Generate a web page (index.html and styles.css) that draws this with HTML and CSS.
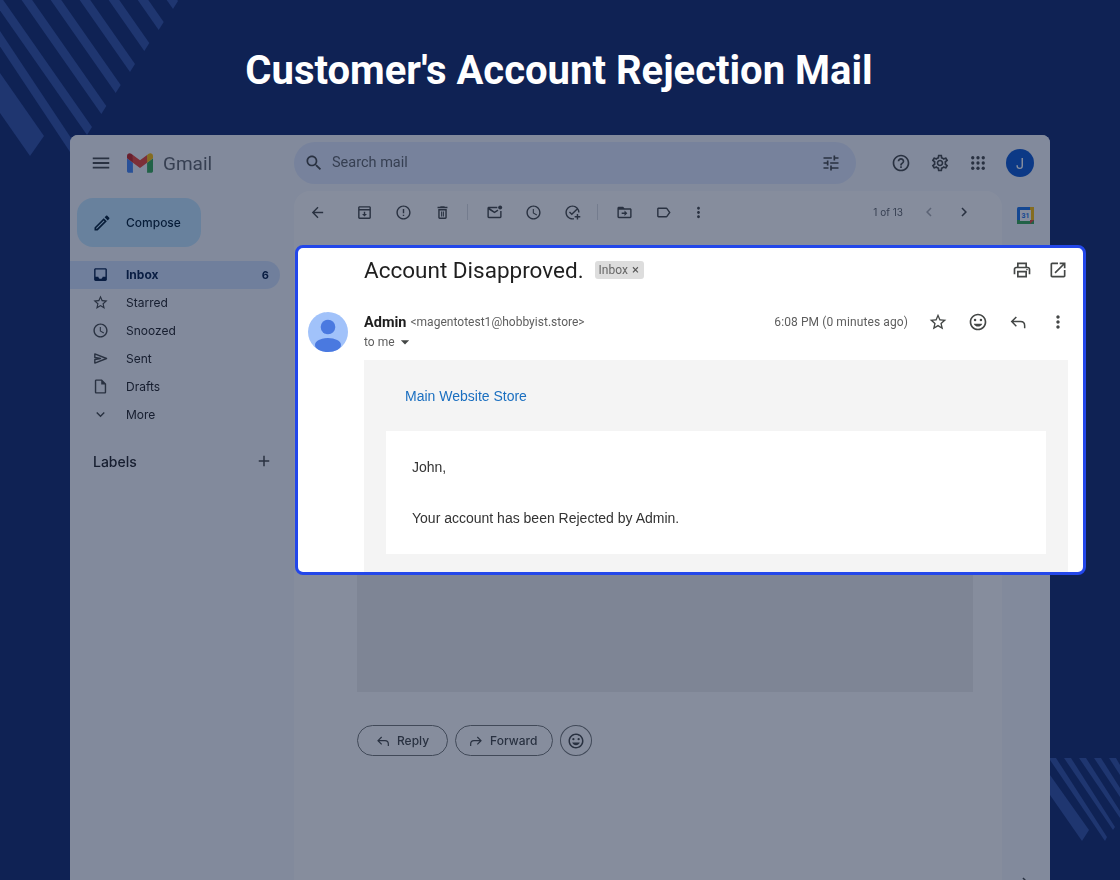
FILE: index.html
```html
<!DOCTYPE html>
<html lang="en">
<head>
    <meta charset="UTF-8">
    <title>Customer's Account Rejection Mail</title>
    <link rel="stylesheet" href="styles.css">
</head>
<body>
    <!-- icon sprite -->
    <svg class="sprite" aria-hidden="true">
        <symbol id="i-menu" viewBox="0 0 24 24"><path d="M3 18h18v-2H3v2zm0-5h18v-2H3v2zm0-7v2h18V6H3z"/></symbol>
        <symbol id="i-search" viewBox="0 0 24 24"><path d="M15.5 14h-.79l-.28-.27C15.41 12.59 16 11.11 16 9.5 16 5.91 13.09 3 9.5 3S3 5.91 3 9.5 5.91 16 9.5 16c1.61 0 3.09-.59 4.23-1.57l.27.28v.79l5 4.99L20.49 19l-4.99-5zm-6 0C7.01 14 5 11.99 5 9.5S7.01 5 9.5 5 14 7.01 14 9.5 11.99 14 9.5 14z"/></symbol>
        <symbol id="i-tune" viewBox="0 0 24 24"><path d="M3 17v2h6v-2H3zM3 5v2h10V5H3zm10 16v-2h8v-2h-8v-2h-2v6h2zM7 9v2H3v2h4v2h2V9H7zm14 4v-2H11v2h10zm-6-4h2V7h4V5h-4V3h-2v6z"/></symbol>
        <symbol id="i-help" viewBox="0 0 24 24"><path d="M11 18h2v-2h-2v2zm1-16C6.48 2 2 6.48 2 12s4.48 10 10 10 10-4.48 10-10S17.52 2 12 2zm0 18c-4.41 0-8-3.59-8-8s3.59-8 8-8 8 3.59 8 8-3.59 8-8 8zm0-14c-2.21 0-4 1.79-4 4h2c0-1.1.9-2 2-2s2 .9 2 2c0 2-3 1.75-3 5h2c0-2.25 3-2.5 3-5 0-2.21-1.79-4-4-4z"/></symbol>
        <symbol id="i-gear" viewBox="0 0 24 24"><path d="M19.43 12.98c.04-.32.07-.64.07-.98 0-.34-.03-.66-.07-.98l2.11-1.65c.19-.15.24-.42.12-.64l-2-3.46c-.09-.16-.26-.25-.44-.25-.06 0-.12.01-.17.03l-2.49 1c-.52-.4-1.08-.73-1.69-.98l-.38-2.65C14.46 2.18 14.25 2 14 2h-4c-.25 0-.46.18-.49.42l-.38 2.65c-.61.25-1.17.59-1.69.98l-2.49-1c-.06-.02-.12-.03-.18-.03-.17 0-.34.09-.43.25l-2 3.46c-.13.22-.07.49.12.64l2.11 1.65c-.04.32-.07.65-.07.98 0 .33.03.66.07.98l-2.11 1.65c-.19.15-.24.42-.12.64l2 3.46c.09.16.26.25.44.25.06 0 .12-.01.17-.03l2.49-1c.52.4 1.08.73 1.69.98l.38 2.65c.03.24.24.42.49.42h4c.25 0 .46-.18.49-.42l.38-2.65c.61-.25 1.17-.59 1.69-.98l2.49 1c.06.02.12.03.18.03.17 0 .34-.09.43-.25l2-3.46c.12-.22.07-.49-.12-.64l-2.11-1.65zm-1.98-1.71c.04.31.05.52.05.73 0 .21-.02.43-.05.73l-.14 1.13.89.7 1.08.84-.7 1.21-1.27-.51-1.04-.42-.9.68c-.43.32-.84.56-1.25.73l-1.06.43-.16 1.13-.2 1.35h-1.4l-.19-1.35-.16-1.13-1.06-.43c-.43-.18-.83-.41-1.23-.71l-.91-.7-1.06.43-1.27.51-.7-1.21 1.08-.84.89-.7-.14-1.13c-.03-.31-.05-.54-.05-.74s.02-.43.05-.73l.14-1.13-.89-.7-1.08-.84.7-1.21 1.27.51 1.04.42.9-.68c.43-.32.84-.56 1.25-.73l1.06-.43.16-1.13.2-1.35h1.39l.19 1.35.16 1.13 1.06.43c.43.18.83.41 1.23.71l.91.7 1.06-.43 1.27-.51.7 1.21-1.07.85-.89.7.14 1.13zM12 8c-2.21 0-4 1.79-4 4s1.79 4 4 4 4-1.79 4-4-1.79-4-4-4zm0 6c-1.1 0-2-.9-2-2s.9-2 2-2 2 .9 2 2-.9 2-2 2z"/></symbol>
        <symbol id="i-apps" viewBox="0 0 24 24"><circle cx="5" cy="5" r="2.2"/><circle cx="12" cy="5" r="2.2"/><circle cx="19" cy="5" r="2.2"/><circle cx="5" cy="12" r="2.2"/><circle cx="12" cy="12" r="2.2"/><circle cx="19" cy="12" r="2.2"/><circle cx="5" cy="19" r="2.2"/><circle cx="12" cy="19" r="2.2"/><circle cx="19" cy="19" r="2.2"/></symbol>
        <symbol id="i-pen" viewBox="0 0 24 24"><path d="M3 17.25V21h3.75L17.81 9.94l-3.75-3.75L3 17.25zM5.92 19H5v-.92l9.06-9.06.92.92L5.92 19zM20.71 5.63l-2.34-2.34c-.39-.39-1.02-.39-1.41 0l-1.83 1.83 3.75 3.75 1.83-1.83c.39-.39.39-1.02 0-1.41z"/></symbol>
        <symbol id="i-inbox" viewBox="0 0 24 24"><path d="M19 3H5c-1.1 0-2 .9-2 2v14c0 1.1.9 2 2 2h14c1.1 0 2-.9 2-2V5c0-1.1-.9-2-2-2zm0 12h-4c0 1.66-1.35 3-3 3s-3-1.34-3-3H5V5h14v10z"/></symbol>
        <symbol id="i-star" viewBox="0 0 24 24"><path d="M22 9.24l-7.19-.62L12 2 9.19 8.63 2 9.24l5.46 4.73L5.82 21 12 17.27 18.18 21l-1.63-7.03L22 9.24zM12 15.4l-3.76 2.27 1-4.28-3.32-2.88 4.38-.38L12 6.1l1.71 4.04 4.38.38-3.32 2.88 1 4.28L12 15.4z"/></symbol>
        <symbol id="i-clock" viewBox="0 0 24 24"><path d="M11.99 2C6.47 2 2 6.48 2 12s4.47 10 9.99 10C17.52 22 22 17.52 22 12S17.52 2 11.99 2zM12 20c-4.42 0-8-3.58-8-8s3.58-8 8-8 8 3.58 8 8-3.58 8-8 8zm.5-13H11v6l5.25 3.15.75-1.23-4.5-2.67z"/></symbol>
        <symbol id="i-sent" viewBox="0 0 24 24"><path d="M4 5.500 20.500 12 4 18.500v-5l8-1.500-8-1.500z" fill="none" stroke="#444746" stroke-width="2" stroke-linejoin="round"/></symbol>
        <symbol id="i-draft" viewBox="0 0 24 24"><path d="M14 2H6c-1.1 0-1.99.9-1.99 2L4 20c0 1.1.89 2 1.99 2H18c1.1 0 2-.9 2-2V8l-6-6zM6 20V4h7v5h5v11H6z"/></symbol>
        <symbol id="i-down" viewBox="0 0 24 24"><path d="M16.59 8.59L12 13.17 7.41 8.59 6 10l6 6 6-6z"/></symbol>
        <symbol id="i-add" viewBox="0 0 24 24"><path d="M19 13h-6v6h-2v-6H5v-2h6V5h2v6h6v2z"/></symbol>
        <symbol id="i-back" viewBox="0 0 24 24"><path d="M20 11H7.83l5.59-5.59L12 4l-8 8 8 8 1.41-1.41L7.83 13H20v-2z"/></symbol>
        <symbol id="i-archive" viewBox="0 0 24 24"><path d="M19 3H5c-1.1 0-2 .9-2 2v14c0 1.1.9 2 2 2h14c1.1 0 2-.9 2-2V5c0-1.1-.9-2-2-2zM5 5h14v2H5V5zm0 14V9h14v10H5zm8-8h-2v3H8.5l3.5 3.5 3.5-3.5H13v-3z"/></symbol>
        <symbol id="i-report" viewBox="0 0 24 24"><path d="M12 2C6.48 2 2 6.48 2 12s4.48 10 10 10 10-4.48 10-10S17.52 2 12 2zm0 18c-4.41 0-8-3.59-8-8s3.59-8 8-8 8 3.59 8 8-3.59 8-8 8zM11 7h2v6h-2zM11 15h2v2h-2z"/></symbol>
        <symbol id="i-trash" viewBox="0 0 24 24"><path d="M6 19c0 1.1.9 2 2 2h8c1.1 0 2-.9 2-2V7H6v12zM8 9h8v10H8V9zm7.5-5l-1-1h-5l-1 1H5v2h14V4zM10 10.5h1.5v7H10zM12.5 10.5H14v7h-1.500z"/></symbol>
        <symbol id="i-unread" viewBox="0 0 24 24"><path d="M16 4H4c-1.1 0-2 .9-2 2v12c0 1.100.9 2 2 2h16c1.100 0 2-.9 2-2V10h-2v8H4V8l8 5 5.500-3.400-1.100-1.700L12 10.500 5.500 6H16z"/><circle cx="20" cy="5" r="2.800"/></symbol>
        <symbol id="i-task" viewBox="0 0 24 24"><path d="M12 2C6.480 2 2 6.480 2 12s4.480 10 10 10c.7 0 1.400-.07 2-.2v-2.060c-.64.170-1.310.260-2 .260-4.410 0-8-3.590-8-8s3.590-8 8-8 8 3.590 8 8h2c0-5.520-4.480-10-10-10zM8.400 10.600 7 12l4 4 8-8-1.400-1.400L11 13.200z"/><path d="M18 14h2v3h3v2h-3v3h-2v-3h-3v-2h3z"/></symbol>
        <symbol id="i-move" viewBox="0 0 24 24"><path d="M20 6h-8l-2-2H4c-1.100 0-2 .9-2 2v12c0 1.100.9 2 2 2h16c1.100 0 2-.9 2-2V8c0-1.100-.9-2-2-2zm0 12H4V8h16v10zm-8-1 4-4-4-4v3H8v2h4z"/></symbol>
        <symbol id="i-label" viewBox="0 0 24 24"><path d="M17.630 5.840C17.270 5.330 16.670 5 16 5L5 5.010C3.900 5.010 3 5.900 3 7v10c0 1.100.9 1.990 2 1.990L16 19c.67 0 1.270-.33 1.630-.84L22 12l-4.370-6.160zM16 17H5V7h11l3.550 5L16 17z"/></symbol>
        <symbol id="i-more" viewBox="0 0 24 24"><path d="M12 8c1.100 0 2-.9 2-2s-.9-2-2-2-2 .9-2 2 .9 2 2 2zm0 2c-1.100 0-2 .9-2 2s.9 2 2 2 2-.9 2-2-.9-2-2-2zm0 6c-1.100 0-2 .9-2 2s.9 2 2 2 2-.9 2-2-.9-2-2-2z"/></symbol>
        <symbol id="i-left" viewBox="0 0 24 24"><path d="M15.410 7.410 14 6l-6 6 6 6 1.410-1.410L10.830 12z"/></symbol>
        <symbol id="i-right" viewBox="0 0 24 24"><path d="M10 6 8.590 7.410 13.170 12l-4.580 4.590L10 18l6-6z"/></symbol>
        <symbol id="i-print" viewBox="0 0 24 24"><path d="M19 8h-1V3H6v5H5c-1.660 0-3 1.340-3 3v6h4v4h12v-4h4v-6c0-1.660-1.340-3-3-3zM8 5h8v3H8V5zm8 14H8v-4h8v4zm2-2v-4H6v4H4v-6c0-.55.45-1 1-1h14c.55 0 1 .45 1 1v6h-2z"/><circle cx="18" cy="11.500" r="1"/></symbol>
        <symbol id="i-open" viewBox="0 0 24 24"><path d="M19 19H5V5h7V3H5c-1.110 0-2 .9-2 2v14c0 1.100.89 2 2 2h14c1.100 0 2-.9 2-2v-7h-2v7zM14 3v2h3.590l-9.830 9.830 1.410 1.410L19 6.410V10h2V3h-7z"/></symbol>
        <symbol id="i-smile" viewBox="0 0 24 24"><path d="M11.990 2C6.470 2 2 6.480 2 12s4.470 10 9.990 10C17.520 22 22 17.520 22 12S17.520 2 11.990 2zM12 20c-4.420 0-8-3.580-8-8s3.580-8 8-8 8 3.580 8 8-3.580 8-8 8z"/><circle cx="15.500" cy="9.500" r="1.500"/><circle cx="8.500" cy="9.500" r="1.500"/><path d="M12 17.500c2.330 0 4.310-1.460 5.110-3.500H6.890c.8 2.040 2.780 3.500 5.110 3.500z"/></symbol>
        <symbol id="i-reply" viewBox="0 0 24 24"><path d="M10 6 4.500 11.500 10 17M4.500 11.500H15c3 0 5 2 5 5v3" fill="none" stroke="#444746" stroke-width="1.800"/></symbol>
        <symbol id="i-forward" viewBox="0 0 24 24"><path d="M14 6l5.500 5.500L14 17M19.500 11.500H9c-3 0-5 2-5 5v3" fill="none" stroke="#444746" stroke-width="1.800"/></symbol>
        <symbol id="i-drop" viewBox="0 0 24 24"><path d="M7 10l5 5 5-5z"/></symbol>
    </svg>

    <!-- background stripes -->
    <svg class="stripes" viewBox="0 0 1120 880" aria-hidden="true">
        <polygon points="44,136 30,156 -100,-30 -100,-70"/>
        <polygon points="77.700,148 72.700,156 -22.300,13 -17.300,5"/>
        <polygon points="92,127 87,135 -13,-8 -8,-16"/>
        <polygon points="106.300,106 101.300,114 1.300,-29 6.300,-37"/>
        <polygon points="120.700,85 115.700,93 15.700,-50 20.700,-58"/>
        <polygon points="135,64 130,72 30,-71 35,-79"/>
        <polygon points="149.300,43 144.300,51 44.300,-92 49.300,-100"/>
        <polygon points="163.700,22 158.700,30 58.700,-113 63.700,-121"/>
        <polygon points="178,1 173,9 73,-134 78,-142"/>
        <polygon points="1050,775 1089,830 1082,841 1050,795"/>
        <polygon points="1050,758 1056,758 1107,837 1105,841 1050,760"/>
        <polygon points="1064,758 1071,758 1115,827 1113,830"/>
        <polygon points="1079,758 1086,758 1120,811 1120,818"/>
        <polygon points="1094,758 1101,758 1120,788 1120,797"/>
        <polygon points="1109,758 1116,758 1120,765 1120,775"/>
    </svg>

    <h1 class="page-title">Customer's Account Rejection Mail</h1>

    <div class="gmail-window">
        <div class="gmail">
            <aside class="sidebar">
                <div class="brand">
                    <svg class="icon brand-menu"><use href="#i-menu"/></svg>
                    <svg class="gmail-logo" viewBox="52 42 88 66">
                        <path fill="#4285f4" d="M58 108h14V74L52 59v43c0 3.320 2.690 6 6 6"/>
                        <path fill="#34a853" d="M120 108h14c3.320 0 6-2.690 6-6V59l-20 15"/>
                        <path fill="#fbbc04" d="M120 48v26l20-15v-8c0-7.420-8.470-11.650-14.400-7.200"/>
                        <path fill="#ea4335" d="M72 74V48l24 18 24-18v26L96 92"/>
                        <path fill="#c5221f" d="M52 51v8l20 15V48l-5.600-4.200c-5.940-4.450-14.400-.22-14.400 7.200"/>
                    </svg>
                    <span class="brand-name">Gmail</span>
                </div>
                <div class="compose">
                    <svg class="icon compose-icon"><use href="#i-pen"/></svg>
                    <span>Compose</span>
                </div>
                <nav class="nav">
                    <div class="nav-item active">
                        <svg class="icon"><use href="#i-inbox"/></svg>
                        <span>Inbox</span>
                        <span class="nav-count">6</span>
                    </div>
                    <div class="nav-item"><svg class="icon"><use href="#i-star"/></svg><span>Starred</span></div>
                    <div class="nav-item"><svg class="icon"><use href="#i-clock"/></svg><span>Snoozed</span></div>
                    <div class="nav-item"><svg class="icon"><use href="#i-sent"/></svg><span>Sent</span></div>
                    <div class="nav-item"><svg class="icon"><use href="#i-draft"/></svg><span>Drafts</span></div>
                    <div class="nav-item"><svg class="icon"><use href="#i-down"/></svg><span>More</span></div>
                </nav>
                <div class="labels">
                    <span>Labels</span>
                    <svg class="icon"><use href="#i-add"/></svg>
                </div>
            </aside>

            <div class="content">
                <header class="topbar">
                    <div class="search">
                        <svg class="icon search-icon"><use href="#i-search"/></svg>
                        <span class="search-text">Search mail</span>
                        <svg class="icon tune-icon"><use href="#i-tune"/></svg>
                    </div>
                    <div class="top-actions">
                        <span class="top-btn"><svg class="icon-lg"><use href="#i-help"/></svg></span>
                        <span class="top-btn"><svg class="icon-lg"><use href="#i-gear"/></svg></span>
                        <span class="top-btn"><svg class="icon-lg apps"><use href="#i-apps"/></svg></span>
                        <span class="avatar">J</span>
                    </div>
                </header>

                <div class="panes">
                    <main class="main">
                        <div class="toolbar">
                            <span class="tool tool-back"><svg class="icon"><use href="#i-back"/></svg></span>
                            <span class="tool tool-first"><svg class="icon"><use href="#i-archive"/></svg></span>
                            <span class="tool"><svg class="icon"><use href="#i-report"/></svg></span>
                            <span class="tool"><svg class="icon"><use href="#i-trash"/></svg></span>
                            <span class="tool-divider"></span>
                            <span class="tool"><svg class="icon"><use href="#i-unread"/></svg></span>
                            <span class="tool"><svg class="icon"><use href="#i-clock"/></svg></span>
                            <span class="tool"><svg class="icon"><use href="#i-task"/></svg></span>
                            <span class="tool-divider"></span>
                            <span class="tool"><svg class="icon"><use href="#i-move"/></svg></span>
                            <span class="tool"><svg class="icon"><use href="#i-label"/></svg></span>
                            <span class="tool tool-sm"><svg class="icon"><use href="#i-more"/></svg></span>
                            <span class="pager-text">1 of 13</span>
                            <span class="pager-btn disabled"><svg class="icon"><use href="#i-left"/></svg></span>
                            <span class="pager-btn"><svg class="icon"><use href="#i-right"/></svg></span>
                        </div>
                        <div class="mail-shadow"></div>
                        <div class="replies">
                            <span class="reply-btn reply-back"><svg class="icon"><use href="#i-reply"/></svg>Reply</span>
                            <span class="reply-btn reply-forward"><svg class="icon"><use href="#i-forward"/></svg>Forward</span>
                            <span class="reply-btn reply-emoji"><svg class="icon"><use href="#i-smile"/></svg></span>
                        </div>
                    </main>
                    <aside class="rail">
                        <svg class="calendar" viewBox="0 0 17 17">
                            <rect width="17" height="17" rx="1.500" fill="#1a73e8"/>
                            <rect x="13" width="4" height="17" fill="#fbbc04"/>
                            <rect y="13" width="17" height="4" fill="#34a853"/>
                            <rect x="3" y="3" width="11" height="11" fill="#fff"/>
                            <text x="8.500" y="11" class="calendar-day">31</text>
                            <path d="M13 17l4-4h-4z" fill="#ea4335"/>
                        </svg>
                        <svg class="icon"><use href="#i-right"/></svg>
                    </aside>
                </div>
            </div>
        </div>
        <div class="dim"></div>
    </div>

    <!-- highlighted mail -->
    <section class="mail-card">
        <div class="subject-row">
            <h2 class="subject">Account Disapproved.</h2>
            <span class="chip">Inbox <b>×</b></span>
            <span class="subject-actions">
                <svg class="icon-card"><use href="#i-print"/></svg>
                <svg class="icon-card"><use href="#i-open"/></svg>
            </span>
        </div>
        <div class="message">
            <svg class="sender-photo" viewBox="0 0 40 40">
                <circle cx="20" cy="20" r="20" fill="#a1c2fa"/>
                <circle cx="20" cy="15" r="7.300" fill="#4a79e0"/>
                <ellipse cx="20" cy="33" rx="13" ry="7" fill="#4a79e0"/>
            </svg>
            <div class="message-main">
                <div class="message-head">
                    <span class="sender-name">Admin</span>
                    <span class="sender-mail">&lt;magentotest1@hobbyist.store&gt;</span>
                    <span class="sent-time">6:08 PM (0 minutes ago)</span>
                    <span class="head-btn"><svg class="icon-card"><use href="#i-star"/></svg></span>
                    <span class="head-btn"><svg class="icon-card"><use href="#i-smile"/></svg></span>
                    <span class="head-btn"><svg class="icon-card"><use href="#i-reply"/></svg></span>
                    <span class="head-btn"><svg class="icon-card"><use href="#i-more"/></svg></span>
                </div>
                <div class="to-line">to me <svg class="icon-drop"><use href="#i-drop"/></svg></div>
                <div class="mail-body">
                    <a class="store-link">Main Website Store</a>
                    <div class="mail-box">
                        <p>John,</p>
                        <p>Your account has been Rejected by Admin.</p>
                    </div>
                </div>
            </div>
        </div>
    </section>
</body>
</html>
```

FILE: styles.css
```css
* {
    margin: 0;
    padding: 0;
    box-sizing: border-box;
}

html, body {
    height: 100%;
    overflow: hidden;
}

body {
    position: relative;
    background-color: #0f2254;
    font-family: Roboto, sans-serif;
    color: #202124;
}

.sprite {
    display: none;
}

.stripes {
    position: absolute;
    left: 0;
    top: 0;
    width: 1120px;
    height: 880px;
    fill: #1f3670;
}

.page-title {
    position: relative;
    height: 135px;
    padding: 5px 2px 0 0;
    display: flex;
    align-items: center;
    justify-content: center;
    font-size: 40px;
    font-weight: 700;
    color: #fff;
}

/* dimmed gmail window */
.gmail-window {
    position: relative;
    width: 980px;
    height: 745px;
    margin-left: 70px;
    border-radius: 8px 8px 0 0;
    overflow: hidden;
    background-color: #f6f8fc;
}

.gmail {
    display: flex;
    height: 100%;
    font-family: Inter, Roboto, sans-serif;
    filter: blur(0.5px);
}

.dim {
    position: absolute;
    inset: 0;
    background-color: rgba(14, 28, 60, 0.5);
}

.icon {
    width: 18px;
    height: 18px;
    flex: none;
    fill: #444746;
}

.icon-lg {
    width: 20px;
    height: 20px;
    fill: #444746;
}

.icon-lg.apps {
    width: 18px;
    height: 18px;
}

.sidebar {
    width: 224px;
    flex: none;
}

.brand {
    height: 56px;
    padding-left: 20px;
    display: flex;
    align-items: center;
}

.brand-menu {
    width: 22px;
    height: 22px;
}

.gmail-logo {
    width: 26px;
    height: 20px;
    margin-left: 15px;
}

.brand-name {
    margin-left: 10px;
    font-family: Roboto, sans-serif;
    font-size: 19px;
    color: #5f6368;
}

.compose {
    width: 124px;
    height: 49px;
    margin: 7px 0 0 7px;
    padding-left: 15px;
    display: flex;
    align-items: center;
    gap: 14px;
    border-radius: 16px;
    background-color: #c2e7ff;
    font-size: 12px;
    font-weight: 500;
    color: #001d35;
}

.compose-icon {
    width: 20px;
    height: 20px;
    fill: #001d35;
}

.nav {
    margin-top: 14px;
}

.nav-item {
    width: 210px;
    height: 28px;
    padding: 0 11px 1px 22px;
    display: flex;
    align-items: center;
    gap: 16px;
    border-radius: 0 14px 14px 0;
    font-size: 12px;
    color: #202124;
}

.nav-item .icon {
    width: 17px;
    height: 17px;
    margin-right: 1px;
}

.nav-item.active {
    background-color: #d3e3fd;
    font-weight: 700;
    color: #041e49;
}

.nav-item.active .icon {
    fill: #041e49;
}

.nav-count {
    margin-left: auto;
    font-size: 11px;
}

.labels {
    width: 210px;
    height: 26px;
    margin-top: 19px;
    padding: 0 7px 0 23px;
    display: flex;
    align-items: center;
    justify-content: space-between;
    font-size: 14px;
    font-weight: 500;
}

.content {
    flex: 1;
    min-width: 0;
}

.topbar {
    height: 56px;
    display: flex;
    align-items: center;
}

.search {
    width: 562px;
    height: 42px;
    padding: 0 15px 1px 10px;
    display: flex;
    align-items: center;
    gap: 8px;
    border-radius: 21px;
    background-color: #e0e8fc;
}

.search-icon {
    width: 20px;
    height: 20px;
}

.search-text {
    font-family: Roboto, sans-serif;
    font-size: 14.500px;
    color: #5f6368;
}

.tune-icon {
    margin-left: auto;
    width: 20px;
    height: 20px;
}

.top-actions {
    margin-left: 26px;
    display: flex;
    align-items: center;
}

.top-btn {
    width: 38.500px;
    display: flex;
    justify-content: center;
}

.avatar {
    width: 28px;
    height: 28px;
    margin-left: 8.500px;
    display: flex;
    align-items: center;
    justify-content: center;
    border-radius: 50%;
    background-color: #0b57d0;
    font-size: 15px;
    color: #fff;
}

.panes {
    display: flex;
}

.main {
    width: 708px;
    height: 689px;
    border-radius: 16px 16px 0 0;
    background-color: #fff;
}

.toolbar {
    height: 42px;
    padding-left: 3.500px;
    display: flex;
    align-items: center;
}

.tool {
    width: 39px;
    display: flex;
    justify-content: center;
}

.tool .icon {
    width: 17px;
    height: 17px;
}

.tool-first {
    margin-left: 8.500px;
}

.tool-sm {
    width: 30px;
}

.tool-divider {
    width: 1px;
    height: 16px;
    margin: 0 7px 0 5px;
    background-color: #dadce0;
}

.pager-text {
    margin-left: auto;
    margin-right: 8.500px;
    font-size: 10px;
    color: #5f6368;
}

.pager-btn {
    width: 35px;
    display: flex;
    justify-content: center;
}

.pager-btn:last-child {
    margin-right: 20.500px;
}

.pager-btn.disabled .icon {
    fill: #a9abae;
}

.mail-shadow {
    width: 616px;
    height: 332px;
    margin: 127px 0 0 63px;
    background-color: #eeeeee;
}

.replies {
    margin: 33px 0 0 63px;
    display: flex;
    gap: 7px;
}

.reply-btn {
    height: 31px;
    display: flex;
    align-items: center;
    gap: 6px;
    border: 1px solid #747775;
    border-radius: 16px;
    font-size: 12px;
    font-weight: 500;
    color: #444746;
}

.reply-back {
    padding: 0 18px 0 17px;
}

.reply-forward {
    padding: 0 15px 0 12px;
}

.reply-btn .icon {
    width: 16px;
    height: 16px;
}

.reply-emoji {
    width: 32px;
    justify-content: center;
    border-radius: 50%;
}

.reply-emoji .icon {
    width: 18px;
    height: 18px;
}

.rail {
    width: 48px;
    height: 700px;
    padding: 16px 2px 0 0;
    display: flex;
    flex-direction: column;
    align-items: center;
    justify-content: space-between;
}

.calendar {
    width: 17px;
    height: 17px;
}

.calendar-day {
    font-family: Roboto, sans-serif;
    font-size: 7px;
    font-weight: 700;
    fill: #1a73e8;
    text-anchor: middle;
}

/* highlighted mail card */
.mail-card {
    position: absolute;
    left: 295px;
    top: 245px;
    width: 791px;
    height: 330px;
    overflow: hidden;
    border: 3px solid #2347ea;
    border-radius: 8px;
    background-color: #fff;
}

.icon-card {
    width: 20px;
    height: 20px;
    fill: #444746;
}

.subject-row {
    height: 44px;
    padding: 0 15px 1px 66px;
    display: flex;
    align-items: center;
}

.subject {
    font-size: 22.500px;
    font-weight: 400;
    color: #1f1f1f;
}

.chip {
    margin-left: 11px;
    height: 18px;
    padding: 0 5px 0 4px;
    display: flex;
    align-items: center;
    gap: 4px;
    border-radius: 3px;
    background-color: #dddddd;
    font-size: 12px;
    color: #666;
}

.chip b {
    font-weight: 400;
    font-size: 13px;
    color: #555;
}

.subject-actions {
    margin-left: auto;
    display: flex;
    gap: 16px;
}

.message {
    margin-top: 20px;
    padding-left: 10px;
    display: flex;
    gap: 16px;
}

.sender-photo {
    width: 40px;
    height: 40px;
    flex: none;
}

.message-main {
    width: 704px;
}

.message-head {
    height: 20px;
    display: flex;
    align-items: center;
}

.sender-name {
    font-size: 14.500px;
    font-weight: 700;
    color: #1f1f1f;
}

.sender-mail {
    margin-left: 4px;
    font-size: 12px;
    letter-spacing: 0.02px;
    color: #5e5e5e;
}

.sent-time {
    margin-left: auto;
    margin-right: 10px;
    font-size: 12px;
    letter-spacing: 0.1px;
    color: #5e5e5e;
}

.head-btn {
    width: 40px;
    display: flex;
    justify-content: center;
}

.head-btn:last-child {
    margin-right: -10px;
}

.to-line {
    height: 20px;
    display: flex;
    align-items: center;
    font-size: 12px;
    color: #5e5e5e;
}

.icon-drop {
    width: 20px;
    height: 20px;
    fill: #444746;
}

.mail-body {
    height: 212px;
    margin-top: 8px;
    padding-top: 26px;
    background-color: #f4f4f4;
    font-family: "Liberation Sans", Arial, sans-serif;
    font-size: 14px;
    line-height: 20px;
}

.store-link {
    display: block;
    padding-left: 41px;
    color: #1a6fc0;
}

.mail-box {
    margin: 25px 22px 0;
    padding: 26px;
    background-color: #fff;
    color: #333;
}

.mail-box p + p {
    margin-top: 31px;
}
```
